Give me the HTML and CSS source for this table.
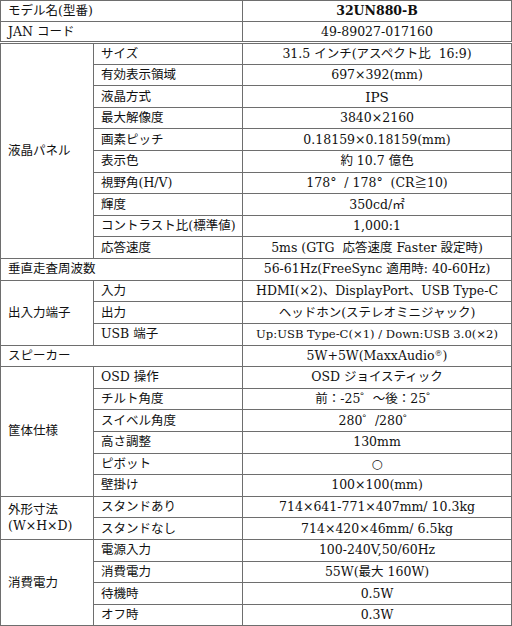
FILE: index.html
```html
<!DOCTYPE html>
<html lang="ja">
<head>
<meta charset="utf-8">
<title>32UN880-B 仕様</title>
<link rel="stylesheet" href="styles.css">
</head>
<body>
<table class="spec">
  <colgroup>
    <col class="c1">
    <col class="c2">
    <col class="c3">
  </colgroup>
  <tbody>
    <tr class="top"><td class="lbl" colspan="2">モデル名(型番)</td><td class="val model">32UN880-B</td></tr>
    <tr class="top sep"><td class="lbl" colspan="2">JAN コード</td><td class="val">49-89027-017160</td></tr>

    <tr><td class="lbl" rowspan="10">液晶パネル</td><td class="sub">サイズ</td><td class="val">31.5 インチ(アスペクト比&nbsp; 16:9)</td></tr>
    <tr><td class="sub">有効表示領域</td><td class="val">697×392(mm)</td></tr>
    <tr><td class="sub">液晶方式</td><td class="val ips">IPS</td></tr>
    <tr><td class="sub">最大解像度</td><td class="val">3840×2160</td></tr>
    <tr><td class="sub">画素ピッチ</td><td class="val">0.18159×0.18159(mm)</td></tr>
    <tr><td class="sub">表示色</td><td class="val">約 10.7 億色</td></tr>
    <tr><td class="sub">視野角(H/V)</td><td class="val">178°&nbsp; / 178°&nbsp; (CR≧10)</td></tr>
    <tr><td class="sub">輝度</td><td class="val">350cd/㎡</td></tr>
    <tr><td class="sub">コントラスト比(標準値)</td><td class="val">1,000:1</td></tr>
    <tr><td class="sub">応答速度</td><td class="val">5ms (GTG&nbsp; 応答速度 Faster 設定時)</td></tr>

    <tr><td class="lbl" colspan="2">垂直走査周波数</td><td class="val">56-61Hz(FreeSync 適用時: 40-60Hz)</td></tr>

    <tr><td class="lbl" rowspan="3">出入力端子</td><td class="sub">入力</td><td class="val">HDMI(×2)、DisplayPort、USB Type-C</td></tr>
    <tr><td class="sub">出力</td><td class="val">ヘッドホン(ステレオミニジャック)</td></tr>
    <tr><td class="sub">USB 端子</td><td class="val narrow">Up:USB Type-C(×1) / Down:USB 3.0(×2)</td></tr>

    <tr><td class="lbl" colspan="2">スピーカー</td><td class="val">5W+5W(MaxxAudio<sup class="reg">®</sup>)</td></tr>

    <tr><td class="lbl" rowspan="6">筐体仕様</td><td class="sub">OSD 操作</td><td class="val">OSD ジョイスティック</td></tr>
    <tr><td class="sub">チルト角度</td><td class="val">前：-25゜～後：25゜</td></tr>
    <tr><td class="sub">スイベル角度</td><td class="val">280゜/280゜</td></tr>
    <tr><td class="sub">高さ調整</td><td class="val">130mm</td></tr>
    <tr><td class="sub">ピボット</td><td class="val">○</td></tr>
    <tr><td class="sub">壁掛け</td><td class="val">100×100(mm)</td></tr>

    <tr><td class="lbl" rowspan="2">外形寸法<br>(W×H×D)</td><td class="sub">スタンドあり</td><td class="val">714×641-771×407mm/ 10.3kg</td></tr>
    <tr><td class="sub">スタンドなし</td><td class="val">714×420×46mm/ 6.5kg</td></tr>

    <tr><td class="lbl" rowspan="4">消費電力</td><td class="sub">電源入力</td><td class="val">100-240V,50/60Hz</td></tr>
    <tr><td class="sub">消費電力</td><td class="val">55W(最大 160W)</td></tr>
    <tr><td class="sub">待機時</td><td class="val">0.5W</td></tr>
    <tr><td class="sub">オフ時</td><td class="val">0.3W</td></tr>
  </tbody>
</table>
</body>
</html>
```

FILE: styles.css
```css
html, body {
  margin: 0;
  padding: 0;
  background: #ffffff;
}

.spec {
  width: 511px;
  table-layout: fixed;
  border-collapse: collapse;
  font-family: "DejaVu Serif", "Noto Sans CJK JP", serif;
  font-size: 12.5px;
  color: #111111;
}

.c1 { width: 93px; }
.c2 { width: 149px; }
.c3 { width: 269px; }

.spec tr { height: 21.62px; }
.spec tr.top { height: 21px; }

.spec td {
  border: 1px solid #6e6e6e;
  padding: 0 7px;
  vertical-align: middle;
  white-space: nowrap;
  line-height: 16px;
}

.spec tr.sep td {
  border-bottom: 3px double #6e6e6e;
}

.val {
  text-align: center;
  padding: 0 2px;
}

.model {
  font-weight: bold;
}

.ips {
  font-size: 13.5px;
}

.narrow {
  font-size: 11.6px;
}

.reg {
  font-size: 8px;
  line-height: 0;
  vertical-align: 4px;
}
```
